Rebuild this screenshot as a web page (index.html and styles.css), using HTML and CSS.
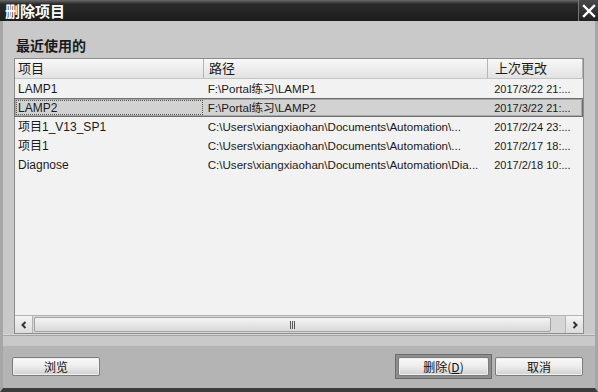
FILE: index.html
```html
<!DOCTYPE html>
<html lang="zh">

<head>
  <meta charset="UTF-8" />
  <title>删除项目</title>
  <link rel="stylesheet" href="styles.css">
</head>

<body>
  <div class="dialog">
    <div class="titlebar">
      <span class="title">删除项目</span>
      <button class="close-btn" title="关闭">
        <svg width="14" height="14" viewBox="0 0 14 14">
          <path d="M2 2 L12 12 M12 2 L2 12" stroke="#fff" stroke-width="2.4" stroke-linecap="square" />
        </svg>
      </button>
    </div>

    <div class="content">
      <h2 class="section-title">最近使用的</h2>

      <div class="list">
        <div class="list-head">
          <div class="col c1">项目</div>
          <div class="col c2">路径</div>
          <div class="col c3">上次更改</div>
        </div>
        <div class="list-body">
          <div class="row">
            <div class="col c1">LAMP1</div>
            <div class="col c2">F:\Portal练习\LAMP1</div>
            <div class="col c3">2017/3/22 21:...</div>
          </div>
          <div class="row selected">
            <div class="col c1 focus">LAMP2</div>
            <div class="col c2">F:\Portal练习\LAMP2</div>
            <div class="col c3">2017/3/22 21:...</div>
          </div>
          <div class="row">
            <div class="col c1">项目1_V13_SP1</div>
            <div class="col c2">C:\Users\xiangxiaohan\Documents\Automation\...</div>
            <div class="col c3">2017/2/24 23:...</div>
          </div>
          <div class="row">
            <div class="col c1">项目1</div>
            <div class="col c2">C:\Users\xiangxiaohan\Documents\Automation\...</div>
            <div class="col c3">2017/2/17 18:...</div>
          </div>
          <div class="row">
            <div class="col c1">Diagnose</div>
            <div class="col c2">C:\Users\xiangxiaohan\Documents\Automation\Dia...</div>
            <div class="col c3">2017/2/18 10:...</div>
          </div>
        </div>
        <div class="hscroll">
          <div class="sb-btn">
            <svg width="8" height="8" viewBox="0 0 8 8"><path d="M5.5 1 L2.5 4 L5.5 7" stroke="#333" stroke-width="2" fill="none" /></svg>
          </div>
          <div class="sb-thumb"><span class="grip"></span></div>
          <div class="sb-btn">
            <svg width="8" height="8" viewBox="0 0 8 8"><path d="M2.5 1 L5.5 4 L2.5 7" stroke="#333" stroke-width="2" fill="none" /></svg>
          </div>
        </div>
      </div>
    </div>

    <div class="footer">
      <button class="btn">浏览</button>
      <div class="btn-group">
        <div class="focus-ring"><button class="btn">删除(<u>D</u>)</button></div>
        <button class="btn">取消</button>
      </div>
    </div>
  </div>
</body>

</html>
```

FILE: styles.css
```css
body {
  margin: 0;
  font-family: "Liberation Sans", "Noto Sans CJK SC", sans-serif;
  color: #1a1a1a;
  background-color: #c9c9c9;
}

.dialog {
  width: 598px;
  height: 392px;
  display: flex;
  flex-direction: column;
  background-color: #c9c9c9;
  box-sizing: border-box;
  border-left: 3px solid #a6a6a6;
  border-right: 3px solid #a6a6a6;
  border-bottom: 4px solid #3c3c3c;
}

.titlebar {
  height: 21px;
  margin: 0 -3px;
  display: flex;
  align-items: center;
  justify-content: space-between;
  background: linear-gradient(#6a6a6a 0, #2a2a2a 4px, #1c1c1c 100%);
  color: white;
}

.title {
  font-family: "Noto Sans CJK SC", sans-serif;
  font-size: 15px;
  font-weight: bold;
  padding-left: 5px;
  line-height: 21px;
}

.close-btn {
  width: 20px;
  height: 21px;
  padding: 0;
  border: none;
  border-left: 1px solid #777;
  background: linear-gradient(#4a4a4a, #202020);
  display: flex;
  align-items: center;
  justify-content: center;
}

.content {
  flex: 1;
  padding: 0 11px 0 11px;
  border-bottom: 1px solid #d8d8d8;
  box-shadow: 0 1px 0 #a4a4a4;
}

.section-title {
  font-family: "Noto Sans CJK SC", sans-serif;
  font-size: 14px;
  font-weight: bold;
  margin: 0;
  padding: 14px 0 0 2px;
  height: 23px;
  line-height: 20px;
}

.list {
  border: 1px solid #8c8c8c;
  background-color: #f2f2f2;
  height: 276px;
  display: flex;
  flex-direction: column;
  box-sizing: border-box;
}

.list-head {
  display: flex;
  height: 19px;
  background: linear-gradient(#f8f8f8, #e2e2e2);
  border-bottom: 1px solid #c4c4c4;
  font-family: "Noto Sans CJK SC", sans-serif;
  font-size: 13px;
}

.list-head .col {
  line-height: 18px;
  border-right: 1px solid #b4b4b4;
}

.col {
  box-sizing: border-box;
  padding-left: 3px;
  white-space: nowrap;
  overflow: hidden;
}

.c1 {
  width: 189px;
}

.c2 {
  width: 284px;
  padding-left: 5px;
}

.c3 {
  width: 95px;
  padding-left: 7px;
}

.list-body {
  flex: 1;
  font-size: 12px;
}

.row {
  display: flex;
  height: 19px;
  line-height: 18px;
  box-sizing: border-box;
  border: 1px solid transparent;
  margin-left: -1px;
}

.row .col {
  font-family: "Liberation Sans", "Noto Sans CJK SC", sans-serif;
}

.row .c2 {
  font-size: 11.6px;
  padding-left: 4px;
}

.row .c3 {
  font-size: 11px;
}

.row.selected {
  background-color: #d2d2d2;
  border: 1px solid #6e6e6e;
  box-shadow: inset 0 0 0 1px #a8a8a8;
}

.focus {
  outline: 1px dotted #555;
  outline-offset: -2px;
}

.hscroll {
  height: 18px;
  display: flex;
  border-top: 1px solid #b4b4b4;
  background-color: #d6d6d6;
  box-sizing: border-box;
}

.sb-btn {
  width: 17px;
  display: flex;
  align-items: center;
  justify-content: center;
  background: linear-gradient(#f4f4f4, #dcdcdc);
  border-right: 1px solid #b4b4b4;
}

.sb-btn:last-child {
  border-right: none;
  border-left: 1px solid #b4b4b4;
}

.sb-thumb {
  flex: 1;
  margin: 1px 14px 1px 1px;
  display: flex;
  align-items: center;
  justify-content: center;
  background: linear-gradient(#f4f4f4, #d8d8d8);
  border: 1px solid #a4a4a4;
  border-radius: 2px;
}

.grip {
  width: 6px;
  height: 8px;
  background: repeating-linear-gradient(90deg, #555 0 1px, transparent 1px 2px);
}

.footer {
  display: flex;
  align-items: center;
  justify-content: space-between;
  padding: 0 12px 2px 9px;
  background-color: #b4b4b4;
  margin-top: 10px;
  border-top: 1px solid #c6c6c6;
  box-sizing: border-box;
  height: 45px;
}

.btn-group {
  display: flex;
  align-items: center;
  gap: 3px;
}

.btn {
  width: 88px;
  height: 19px;
  padding: 0;
  font-family: "Noto Sans CJK SC", sans-serif;
  font-size: 12px;
  line-height: 17px;
  color: #111;
  border: 1px solid #7c7c7c;
  border-radius: 2px;
  background: linear-gradient(#fafafa 0%, #ececec 50%, #cfcfcf 100%);
  box-shadow: inset 0 0 0 1px #f0f0f0;
}

.focus-ring {
  padding: 2px;
  border: 1px solid #6a6a6a;
  background-color: #8e8e8e;
  display: flex;
}

.focus-ring .btn {
  width: 91px;
}
```
